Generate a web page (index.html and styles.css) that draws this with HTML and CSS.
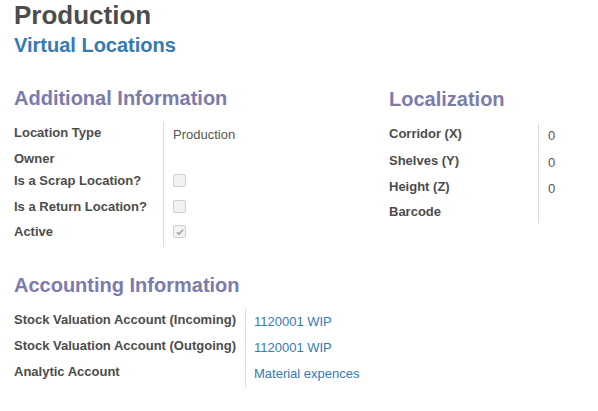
FILE: index.html
```html
<!DOCTYPE html>
<html>
<head>
<meta charset="utf-8">
<link rel="stylesheet" href="styles.css">
</head>
<body>
<div class="sheet">
  <h1 class="title">Production</h1>
  <h2 class="subtitle">Virtual Locations</h2>
  <div class="groups">
    <section class="group">
      <h3 class="sep">Additional Information</h3>
      <div class="fields fields-left">
        <div class="lbl">Location Type</div><div class="val">Production</div>
        <div class="lbl">Owner</div><div class="val"></div>
        <div class="lbl">Is a Scrap Location?</div><div class="val"><span class="cb"></span></div>
        <div class="lbl">Is a Return Location?</div><div class="val"><span class="cb"></span></div>
        <div class="lbl">Active</div><div class="val"><span class="cb"><svg viewBox="0 0 12 12" width="10" height="10"><path d="M2.3 6.2 L4.8 8.6 L9.6 3.2" fill="none" stroke="#9a9a9a" stroke-width="1.8"/></svg></span></div>
      </div>
    </section>
    <section class="group group-right">
      <h3 class="sep">Localization</h3>
      <div class="fields fields-right">
        <div class="lbl">Corridor (X)</div><div class="val">0</div>
        <div class="lbl">Shelves (Y)</div><div class="val">0</div>
        <div class="lbl">Height (Z)</div><div class="val">0</div>
        <div class="lbl">Barcode</div><div class="val"></div>
      </div>
    </section>
  </div>
  <section class="group group-acc">
    <h3 class="sep">Accounting Information</h3>
    <div class="fields fields-acc">
      <div class="lbl">Stock Valuation Account (Incoming)</div><div class="val"><a class="link">1120001 WIP</a></div>
      <div class="lbl">Stock Valuation Account (Outgoing)</div><div class="val"><a class="link">1120001 WIP</a></div>
      <div class="lbl">Analytic Account</div><div class="val"><a class="link">Material expences</a></div>
    </div>
  </section>
</div>
</body>
</html>
```

FILE: styles.css
```css
html, body {
  margin: 0;
  padding: 0;
  background: #ffffff;
}
body {
  font-family: "Liberation Sans", Arial, sans-serif;
  color: #4c4c4c;
  font-size: 13px;
}
.sheet {
  padding-left: 14px;
}
.title {
  margin: 0;
  font-size: 26px;
  line-height: 30px;
  font-weight: bold;
  color: #4c4c4c;
}
.subtitle {
  margin: 3px 0 0 0;
  font-size: 20px;
  line-height: 24px;
  font-weight: bold;
  color: #337ab7;
}
.groups {
  margin-top: 29px;
  display: grid;
  grid-template-columns: 375px 1fr;
}
.group-right {
  margin-top: 1px;
}
.group-acc {
  margin-top: 26px;
}
.sep {
  margin: 0 0 12px 0;
  font-size: 20px;
  line-height: 24px;
  font-weight: bold;
  color: #7c7bad;
}
.fields {
  display: grid;
}
.fields-left {
  grid-template-columns: 150px 1fr;
  grid-template-rows: 26px 22px 26px 25px 26px;
}
.fields-right {
  grid-template-columns: 150px 1fr;
  grid-template-rows: 27px 26px 25px 22px;
}
.fields-acc {
  grid-template-columns: max-content 1fr;
  grid-template-rows: 26px 26px 26px;
}
.lbl {
  font-weight: bold;
  line-height: 18px;
  padding-top: 2px;
  border-right: 1px solid #dcdcdc;
  box-sizing: border-box;
  white-space: nowrap;
  color: #4c4c4c;
}
.fields-acc .lbl {
  padding-right: 9px;
}
.val {
  padding-left: 9px;
  padding-top: 4px;
  line-height: 18px;
  color: #555555;
}
.fields-acc .val {
  padding-left: 8px;
}
.link {
  color: #337ab7;
  text-decoration: none;
}
.cb {
  display: flex;
  align-items: center;
  justify-content: center;
  width: 11px;
  height: 11px;
  border: 1px solid #d0d0d0;
  border-radius: 2px;
  background: #f2f2f2;
}
```
